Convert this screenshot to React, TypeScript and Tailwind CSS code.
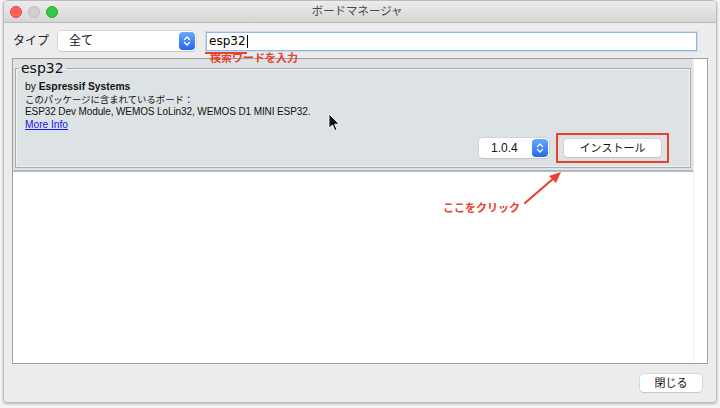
import React from 'react';

const JP = { fontFamily: '"Liberation Sans", "Noto Sans CJK JP", sans-serif' };

function Stepper() {
  return (
    <div className="w-[16px] h-[18px] rounded-[4px] bg-gradient-to-b from-[#6aa8fb] to-[#2466ec] flex items-center justify-center">
      <svg width="8" height="12" viewBox="0 0 8 12" fill="none" stroke="white" strokeWidth="1.4" strokeLinecap="round" strokeLinejoin="round">
        <path d="M1.5 4.5 L4 2 L6.5 4.5" />
        <path d="M1.5 7.5 L4 10 L6.5 7.5" />
      </svg>
    </div>
  );
}

export default function App() {
  return (
    <div className="relative w-[720px] h-[408px] bg-[#f4f4f4] overflow-hidden" style={JP}>
      <div className="ml-[3px] mr-[3px] h-[403px] flex flex-col bg-[#ececec] border border-[#bcbcbc] rounded-t-[5px] rounded-b-[4px] shadow-[0_1px_3px_rgba(0,0,0,0.25)] overflow-hidden">
        {/* title bar */}
        <div className="relative h-[22px] shrink-0 bg-gradient-to-b from-[#ececec] to-[#d6d6d6] border-b border-[#b9b9b9] flex items-center">
          <div className="flex items-center gap-[6px] pl-[6px]">
            <span className="w-[12px] h-[12px] rounded-full bg-[#fc605c] border border-[#de4a45]" />
            <span className="w-[12px] h-[12px] rounded-full bg-[#d0d0d0] border border-[#bdbdbd]" />
            <span className="w-[12px] h-[12px] rounded-full bg-[#34c84a] border border-[#28a93b]" />
          </div>
          <div className="flex-1 text-center pr-[60px] text-[11.5px] text-[#4a4a4a]">ボードマネージャ</div>
        </div>

        {/* toolbar */}
        <div className="h-[35px] shrink-0 flex items-center pl-[9px] pr-[19px] pt-[1px]">
          <span className="text-[12px] text-[#222] w-[45px]">タイプ</span>
          <div className="w-[138px] h-[20px] bg-white rounded-[4px] shadow-[0_0_0_0.5px_#c4c4c4,0_1px_1px_rgba(0,0,0,0.12)] flex items-center justify-between pl-[11px] pr-[1px]">
            <span className="text-[12px] text-[#111]">全て</span>
            <Stepper />
          </div>
          <div className="ml-[10px] flex-1 h-[19px] bg-white border border-[#93b7e0] shadow-[0_0_0_1px_#c9dcf3] flex items-center pl-[2px]">
            <span className="text-[12px] text-black" style={{ fontFamily: '"DejaVu Sans", sans-serif' }}>esp32</span>
            <span className="w-px h-[13px] bg-black ml-[1px]" />
          </div>
        </div>

        {/* list */}
        <div className="flex-1 mx-[8px] bg-white border border-[#a0a0a0] flex">
          <div className="flex-1 self-start">
            <div className="bg-[#dde3e4] border-b-2 border-[#b4b9bb] px-[2px] pt-[1px] pb-[2px]">
              <fieldset className="border border-[#a8afb1] shadow-[inset_0_0_0_1px_#eef1f1] pl-[9px] pr-[21px] pb-[4px] pt-[5px]">
                <legend className="px-[2px] -ml-[6px] text-[14px] text-[#111] leading-[16px]" style={{ fontFamily: '"DejaVu Sans", sans-serif' }}>esp32</legend>
                <div className="text-[10.3px] leading-[12.5px] text-[#111]">
                  by <span className="font-bold">Espressif Systems</span>
                </div>
                <div className="text-[9.4px] leading-[12.5px] text-[#111]">このパッケージに含まれているボード：</div>
                <div className="text-[10px] leading-[12.5px] text-[#111] tracking-[-0.1px]">ESP32 Dev Module, WEMOS LoLin32, WEMOS D1 MINI ESP32.</div>
                <div className="text-[10.2px] leading-[12.5px] text-[#1515e8] underline">More Info</div>
                <div className="flex justify-end items-center gap-[7px] mt-[2px]">
                  <div className="w-[70px] h-[20px] bg-white rounded-[4px] shadow-[0_0_0_0.5px_#c4c4c4,0_1px_1px_rgba(0,0,0,0.12)] flex items-center justify-between pl-[12px] pr-[1px]">
                    <span className="text-[12px] text-[#111]">1.0.4</span>
                    <Stepper />
                  </div>
                  <div className="border-2 border-[#e8412c] px-[6px] py-[4px]">
                    <div className="w-[97px] h-[18px] bg-white rounded-[4px] shadow-[0_0_0_0.5px_#c4c4c4,0_1px_1px_rgba(0,0,0,0.15)] flex items-center justify-center text-[11px] text-[#111]">
                      インストール
                    </div>
                  </div>
                </div>
              </fieldset>
            </div>
          </div>
          <div className="w-[14px] border-l border-[#efefef] bg-white" />
        </div>

        {/* footer */}
        <div className="h-[38px] shrink-0 flex items-center justify-end pr-[14px]">
          <div className="w-[62px] h-[18px] bg-white rounded-[4px] shadow-[0_0_0_0.5px_#c4c4c4,0_1px_1px_rgba(0,0,0,0.15)] flex items-center justify-center text-[11px] text-[#111]">
            閉じる
          </div>
        </div>
      </div>

      {/* annotations */}
      <div className="absolute left-[205px] top-[52px] w-[42px] h-[2px] bg-[#e8412c]" />
      <div className="absolute left-[210px] top-[53px] text-[11px] font-bold text-[#e8412c] leading-[11px]">検索ワードを入力</div>
      <div className="absolute left-[443px] top-[201px] text-[11px] font-bold text-[#e8412c] leading-[14px]">ここをクリック</div>
      <svg className="absolute left-0 top-0" width="720" height="408" viewBox="0 0 720 408">
        <line x1="525" y1="203" x2="554" y2="178" stroke="#e8412c" strokeWidth="2.2" strokeLinecap="round" />
        <path d="M561 172 L549 176 L556 183 Z" fill="#e8412c" />
        <path d="M329 114 L329 128 L332.5 125 L335 130.5 L337 129.6 L334.6 124.2 L339 124 Z" fill="#111" stroke="white" strokeWidth="0.8" />
      </svg>
    </div>
  );
}
